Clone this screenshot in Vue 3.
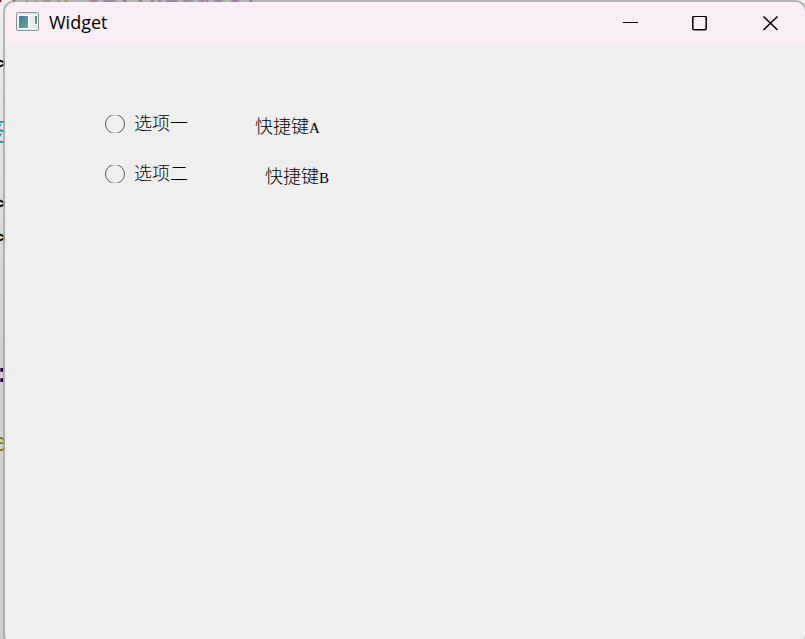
<script setup>
import { ref } from 'vue';

const selected = ref('');

const options = [
  { id: 'one', text: '选项一', shortcut: '快捷键', letter: 'A' },
  { id: 'two', text: '选项二', shortcut: '快捷键', letter: 'B' },
];

// ends of the editor lines that stick out left of the window
const editorLines = [
  { top: 48, text: '>', type: 'plain' },
  { top: 117, text: '签', type: 'comment' },
  { top: 188, text: '>', type: 'plain' },
  { top: 222, text: '>', type: 'plain' },
  { top: 358, text: ':', type: 'access' },
  { top: 427, text: 'e', type: 'keyword' },
];
</script>

<template>
  <div class="desktop">
    <div class="editor" aria-hidden="true">
      <div class="code-top"><span class="red">:</span><span>(</span><span class="keyword">new</span> <span class="type">Ui</span>::<span class="type">Widget</span>)</div>
      <div
        v-for="line in editorLines"
        :key="line.top"
        class="code-end"
        :class="line.type"
        :style="{ top: line.top + 'px' }"
      >{{ line.text }}</div>
    </div>

    <main class="window">
      <header class="title-bar">
        <svg class="app-icon" width="24" height="20" viewBox="0 0 24 20">
          <defs>
            <linearGradient id="screen" x1="0" y1="0" x2="1" y2="1">
              <stop offset="0" stop-color="#3f78a8" />
              <stop offset="1" stop-color="#62b183" />
            </linearGradient>
          </defs>
          <rect x="0.5" y="0.5" width="22" height="18" rx="1" fill="#dfe4e8" stroke="#8b9099" />
          <rect x="1.5" y="2.5" width="20" height="15" fill="#f5f7f8" />
          <rect x="3" y="4" width="9" height="12" fill="url(#screen)" />
          <rect x="14" y="4" width="4" height="7" fill="#e5eae9" />
          <rect x="14" y="13" width="7" height="3" fill="#e5eae9" />
          <rect x="19" y="4" width="2" height="8" fill="url(#screen)" />
        </svg>
        <h1>Widget</h1>
        <div class="controls">
          <button type="button" aria-label="Minimize">
            <svg width="16" height="16" viewBox="0 0 16 16"><path d="M1 6.5H16" /></svg>
          </button>
          <button type="button" aria-label="Maximize">
            <svg width="16" height="16" viewBox="0 0 16 16"><rect class="thick" x="0.8" y="0.3" width="13.4" height="13.4" rx="1.5" /></svg>
          </button>
          <button type="button" aria-label="Close">
            <svg width="16" height="16" viewBox="0 0 16 16"><path class="thick" d="M1.5 0.5L15.5 14M15.5 0.5L1.5 14" /></svg>
          </button>
        </div>
      </header>

      <form class="content">
        <div v-for="option in options" :key="option.id" class="row" :class="option.id">
          <input :id="option.id" v-model="selected" type="radio" name="option" :value="option.id" />
          <label :for="option.id">{{ option.text }}</label>
          <span class="shortcut">{{ option.shortcut }}<span class="letter">{{ option.letter }}</span></span>
        </div>
      </form>
    </main>
  </div>
</template>

<style>
body {
  margin: 0;
}
</style>

<style scoped>
.desktop {
  position: relative;
  display: flex;
  min-height: 100vh;
  overflow: hidden;
  background: linear-gradient(#efefef, #e4e4e4 120px, #cfcfcf 360px, #cfcfcf);
}

.editor {
  position: absolute;
  inset: 0;
  font-family: "Liberation Mono", "Noto Sans CJK SC", monospace;
  font-size: 26px;
  line-height: 34px;
  color: black;
}

.code-top {
  position: absolute;
  top: -22px;
  left: -8px;
  white-space: pre;
}

.code-end {
  position: absolute;
  left: -8px;
}

.red {
  color: #a00000;
}

.keyword {
  color: #808000;
}

.type {
  color: #800080;
}

.comment {
  left: -20px;
  color: #168f9a;
}

.access {
  left: -6px;
  color: #000060;
}

.window {
  position: relative;
  flex: 1;
  display: flex;
  flex-direction: column;
  margin: 0 -2px -8px 3px;
  border: 2px solid rgba(165, 165, 165, 0.8);
  border-radius: 12px;
  background: #efefef;
  background-clip: padding-box;
}

.title-bar {
  display: flex;
  align-items: center;
  height: 43px;
  padding-left: 11px;
  border-radius: 10px 10px 0 0;
  background: #f9eef5;
}

.app-icon {
  margin-bottom: 4px;
}

.title-bar h1 {
  margin: 0 0 0 9px;
  padding-bottom: 4px;
  font: 400 18px/24px "Open Sans", "Noto Sans", sans-serif;
  color: black;
}

.controls {
  display: flex;
  align-self: stretch;
  margin-left: auto;
}

.controls button {
  display: flex;
  align-items: center;
  justify-content: center;
  width: 70px;
  padding: 0;
  border: none;
  background: none;
}

.controls svg {
  fill: none;
  stroke: black;
}

.controls .thick {
  stroke-width: 1.5;
}

.content {
  display: flex;
  flex-direction: column;
  gap: 26px;
  padding: 67px 0 0 100px;
  font: 300 18px/24px "Liberation Serif", "Noto Sans CJK SC", serif;
  color: black;
}

.row {
  display: flex;
  align-items: center;
  height: 24px;
}

.row input {
  appearance: none;
  width: 20px;
  height: 20px;
  margin: 0 9px 0 0;
  border: 1px solid #555;
  border-radius: 50%;
  clip-path: inset(1px 0);
}

.row input:checked {
  background: radial-gradient(#333 0 4px, transparent 5px);
}

.shortcut {
  padding-top: 6px;
  margin-left: 67px;
}

.two .shortcut {
  margin-left: 77px;
}

.letter {
  font-size: 15px;
}
</style>
